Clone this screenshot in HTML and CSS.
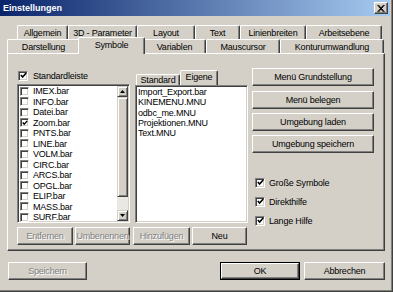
FILE: index.html
```html
<!DOCTYPE html>
<html>
<head>
<meta charset="utf-8">
<link rel="stylesheet" href="styles.css">
</head>
<body>
<div class="window">
  <div class="titlebar">
    <span class="title">Einstellungen</span>
    <span class="close"><svg width="8" height="7" viewBox="0 0 8 7"><path d="M0.5 0 L6.5 7 M1.5 0 L7.5 7 M6.5 0 L0.5 7 M7.5 0 L1.5 7" stroke="#000" stroke-width="1"/></svg></span>
  </div>

  <div class="tabrow row1">
    <div class="tab t-allg">Allgemein</div>
    <div class="tab t-3d">3D - Parameter</div>
    <div class="tab t-layout">Layout</div>
    <div class="tab t-text">Text</div>
    <div class="tab t-lin">Linienbreiten</div>
    <div class="tab t-arb">Arbeitsebene</div>
  </div>
  <div class="tabrow row2">
    <div class="tab t-dar">Darstellung</div>
    <div class="tab t-sym selected">Symbole</div>
    <div class="tab t-var">Variablen</div>
    <div class="tab t-maus">Mauscursor</div>
    <div class="tab t-kont">Konturumwandlung</div>
  </div>

  <div class="panel">
    <div class="col-left">
      <div class="checkrow top-check">
        <span class="cb"><svg width="7" height="7" viewBox="0 0 7 7"><path d="M0.8 3 L2.6 5 L6.2 1" fill="none" stroke="#000" stroke-width="1.6"/></svg></span>
        <span>Standardleiste</span>
      </div>
      <div class="listbox list-left">
        <div class="items">
          <div class="item"><span class="cb small"></span><span>IMEX.bar</span></div>
          <div class="item"><span class="cb small"></span><span>INFO.bar</span></div>
          <div class="item"><span class="cb small"></span><span>Datei.bar</span></div>
          <div class="item"><span class="cb small"><svg width="6" height="6" viewBox="0 0 7 7"><path d="M0.8 3 L2.6 5 L6.2 1" fill="none" stroke="#000" stroke-width="1.6"/></svg></span><span>Zoom.bar</span></div>
          <div class="item"><span class="cb small"></span><span>PNTS.bar</span></div>
          <div class="item"><span class="cb small"></span><span>LINE.bar</span></div>
          <div class="item"><span class="cb small"></span><span>VOLM.bar</span></div>
          <div class="item"><span class="cb small"></span><span>CIRC.bar</span></div>
          <div class="item"><span class="cb small"></span><span>ARCS.bar</span></div>
          <div class="item"><span class="cb small"></span><span>OPGL.bar</span></div>
          <div class="item"><span class="cb small"></span><span>ELIP.bar</span></div>
          <div class="item"><span class="cb small"></span><span>MASS.bar</span></div>
          <div class="item"><span class="cb small"></span><span>SURF.bar</span></div>
        </div>
        <div class="scrollbar">
          <div class="sb-btn"><svg width="5" height="3" viewBox="0 0 5 3"><path d="M2.5 0 L5 3 L0 3 Z" fill="#000"/></svg></div>
          <div class="sb-thumb"></div>
          <div class="sb-track"></div>
          <div class="sb-btn"><svg width="5" height="3" viewBox="0 0 5 3"><path d="M0 0 L5 0 L2.5 3 Z" fill="#000"/></svg></div>
        </div>
      </div>
      <div class="btnrow">
        <div class="btn disabled b-entf">Entfernen</div>
        <div class="btn disabled b-umb">Umbenennen</div>
      </div>
    </div>

    <div class="col-mid">
      <div class="minitabs">
        <div class="minitab mt-std">Standard</div>
        <div class="minitab mt-eig selected">Eigene</div>
      </div>
      <div class="listbox list-mid">
        <div class="items plain">
          <div class="item">Import_Export.bar</div>
          <div class="item">KINEMENU.MNU</div>
          <div class="item">odbc_me.MNU</div>
          <div class="item">Projektionen.MNU</div>
          <div class="item">Text.MNU</div>
        </div>
      </div>
      <div class="btnrow">
        <div class="btn disabled b-hinz">Hinzufügen</div>
        <div class="btn b-neu">Neu</div>
      </div>
    </div>

    <div class="col-right">
      <div class="btn rbtn">Menü Grundstellung</div>
      <div class="btn rbtn">Menü belegen</div>
      <div class="btn rbtn">Umgebung laden</div>
      <div class="btn rbtn">Umgebung speichern</div>
      <div class="checks">
        <div class="checkrow">
          <span class="cb"><svg width="7" height="7" viewBox="0 0 7 7"><path d="M0.8 3 L2.6 5 L6.2 1" fill="none" stroke="#000" stroke-width="1.6"/></svg></span>
          <span>Große Symbole</span>
        </div>
        <div class="checkrow">
          <span class="cb"><svg width="7" height="7" viewBox="0 0 7 7"><path d="M0.8 3 L2.6 5 L6.2 1" fill="none" stroke="#000" stroke-width="1.6"/></svg></span>
          <span>Direkthilfe</span>
        </div>
        <div class="checkrow">
          <span class="cb"><svg width="7" height="7" viewBox="0 0 7 7"><path d="M0.8 3 L2.6 5 L6.2 1" fill="none" stroke="#000" stroke-width="1.6"/></svg></span>
          <span>Lange Hilfe</span>
        </div>
      </div>
    </div>
  </div>

  <div class="footer">
    <div class="btn disabled b-speich">Speichern</div>
    <div class="spacer"></div>
    <div class="default-wrap"><div class="btn b-ok">OK</div></div>
    <div class="btn b-abb">Abbrechen</div>
  </div>
</div>
</body>
</html>
```

FILE: styles.css
```css
* { box-sizing: border-box; }
html, body { margin: 0; padding: 0; }
body {
  width: 393px;
  height: 292px;
  overflow: hidden;
  font-family: "Liberation Sans", Arial, sans-serif;
  font-size: 9px;
  letter-spacing: -0.2px;
  color: #000;
  background: #d4d0c8;
}
.window {
  width: 393px;
  height: 292px;
  background: #d4d0c8;
  box-shadow: inset -1px -1px #404040, inset -2px -2px #808080;
  overflow: hidden;
}
.titlebar {
  height: 16px;
  margin-right: 3px;
  background: linear-gradient(to right, #0a246a, #a6caf0);
  display: flex;
  align-items: center;
  justify-content: space-between;
  padding: 0 2px 0 3px;
}
.title {
  color: #fff;
  font-weight: bold;
  font-size: 9px;
  letter-spacing: 0;
}
.close {
  width: 14px;
  height: 12px;
  background: #d4d0c8;
  border: 1px solid;
  border-color: #fff #404040 #404040 #fff;
  box-shadow: inset -1px -1px #808080;
  display: flex;
  align-items: center;
  justify-content: center;
}

/* main tabs */
.tabrow {
  display: flex;
  height: 14px;
  align-items: flex-end;
}
.row1 { margin-top: 9px; padding-left: 17px; }
.row2 { padding-left: 7px; }
.tab {
  height: 14px;
  border-top: 1px solid #fff;
  border-left: 1px solid #fff;
  border-right: 1px solid #404040;
  box-shadow: inset -1px 0 #808080;
  border-radius: 2px 2px 0 0;
  display: flex;
  align-items: center;
  justify-content: center;
  white-space: nowrap;
  background: #d4d0c8;
}
.t-allg { width: 51px; }
.t-3d { width: 69px; }
.t-layout { width: 58px; }
.t-text { width: 45px; }
.t-lin { width: 66px; }
.t-arb { width: 76px; }
.t-dar { width: 73px; }
.t-sym { width: 63px; }
.t-var { width: 63px; }
.t-maus { width: 74px; }
.t-kont { width: 104px; }
.tab.selected {
  position: relative;
  z-index: 2;
  width: 67px;
  height: 17px;
  margin: 0 -2px -1px -2px;
  padding-bottom: 2px;
}

/* panel */
.panel {
  margin-left: 7px;
  width: 378px;
  height: 198px;
  border: 1px solid;
  border-color: #fff #404040 #404040 #fff;
  box-shadow: inset -1px -1px #808080;
  display: flex;
  align-items: flex-start;
  padding: 14px 0 0 9px;
}
.col-left { width: 113px; margin-top: 2px; }
.col-mid { width: 115px; margin-left: 3px; margin-top: 2px; }
.col-right { width: 122px; margin-left: 4px; }

.checkrow {
  display: flex;
  align-items: center;
  height: 11px;
  white-space: nowrap;
}
.checkrow .cb { margin-left: 1px; margin-right: 5px; }
.cb {
  width: 10px;
  height: 10px;
  flex: none;
  background: #fff;
  border: 1px solid;
  border-color: #808080 #fff #fff #808080;
  box-shadow: inset 1px 1px #404040, inset -1px -1px #d4d0c8;
  display: flex;
  align-items: center;
  justify-content: center;
}
.cb.small { width: 9px; height: 9px; }

.listbox {
  background: #fff;
  border: 1px solid;
  border-color: #808080 #fff #fff #808080;
  box-shadow: inset 1px 1px #404040, inset -1px -1px #d4d0c8;
  padding: 1px;
  display: flex;
}
.list-left { margin-top: 3px; height: 139px; }
.list-mid { margin-left: 2px; width: 113px; height: 138px; }
.items { flex: 1; }
.item {
  height: 10.5px;
  line-height: 10.5px;
  display: flex;
  align-items: center;
  white-space: nowrap;
}
.list-left .item { padding-left: 1px; }
.list-left .item .cb { margin-right: 4px; }
.items.plain .item { padding-left: 1px; height: 10.3px; line-height: 10.3px; }

.scrollbar {
  width: 11px;
  display: flex;
  flex-direction: column;
}
.sb-btn, .sb-thumb {
  background: #d4d0c8;
  border: 1px solid;
  border-color: #d4d0c8 #404040 #404040 #d4d0c8;
  box-shadow: inset 1px 1px #fff, inset -1px -1px #808080;
}
.sb-btn {
  height: 11px;
  flex: none;
  display: flex;
  align-items: center;
  justify-content: center;
}
.sb-thumb { height: 100px; flex: none; }
.sb-track {
  flex: 1;
  background: #eae8e3;
}

.btn {
  height: 18px;
  background: #d4d0c8;
  border: 1px solid;
  border-color: #fff #404040 #404040 #fff;
  box-shadow: inset -1px -1px #808080;
  display: flex;
  align-items: center;
  justify-content: center;
  white-space: nowrap;
}
.btn.disabled {
  color: #808080;
  text-shadow: 1px 1px #fff;
}
.btnrow {
  display: flex;
  gap: 2px;
  margin-top: 4px;
}
.b-entf { width: 56px; }
.b-umb { width: 55px; }
.b-hinz { width: 57px; }
.b-neu { width: 55px; }

.minitabs {
  display: flex;
  align-items: flex-end;
  height: 15px;
  padding-left: 3px;
}
.minitab {
  height: 11px;
  border-top: 1px solid #fff;
  border-left: 1px solid #fff;
  border-right: 1px solid #404040;
  box-shadow: inset -1px 0 #808080;
  border-radius: 2px 2px 0 0;
  display: flex;
  align-items: center;
  justify-content: center;
  background: #d4d0c8;
}
.mt-std { width: 44px; }
.mt-eig { width: 38px; }
.minitab.selected {
  height: 15px;
  padding-bottom: 2px;
  position: relative;
  z-index: 2;
}

.rbtn { width: 122px; }
.rbtn + .rbtn { margin-top: 4px; }
.rbtn:nth-child(2) { margin-top: 5px; }
.checks {
  margin-top: 24px;
  display: flex;
  flex-direction: column;
  gap: 8px;
}
.checks .cb { margin-left: 3px; margin-right: 4px; }

.footer {
  display: flex;
  margin-top: 11px;
  padding: 0 8px 0 8px;
}
.spacer { flex: 1; }
.b-speich { width: 79px; }
.default-wrap {
  width: 80px;
  height: 18px;
  border: 1px solid #000;
  margin-right: 4px;
}
.b-ok { width: 78px; height: 16px; }
.b-abb { width: 81px; }
```
